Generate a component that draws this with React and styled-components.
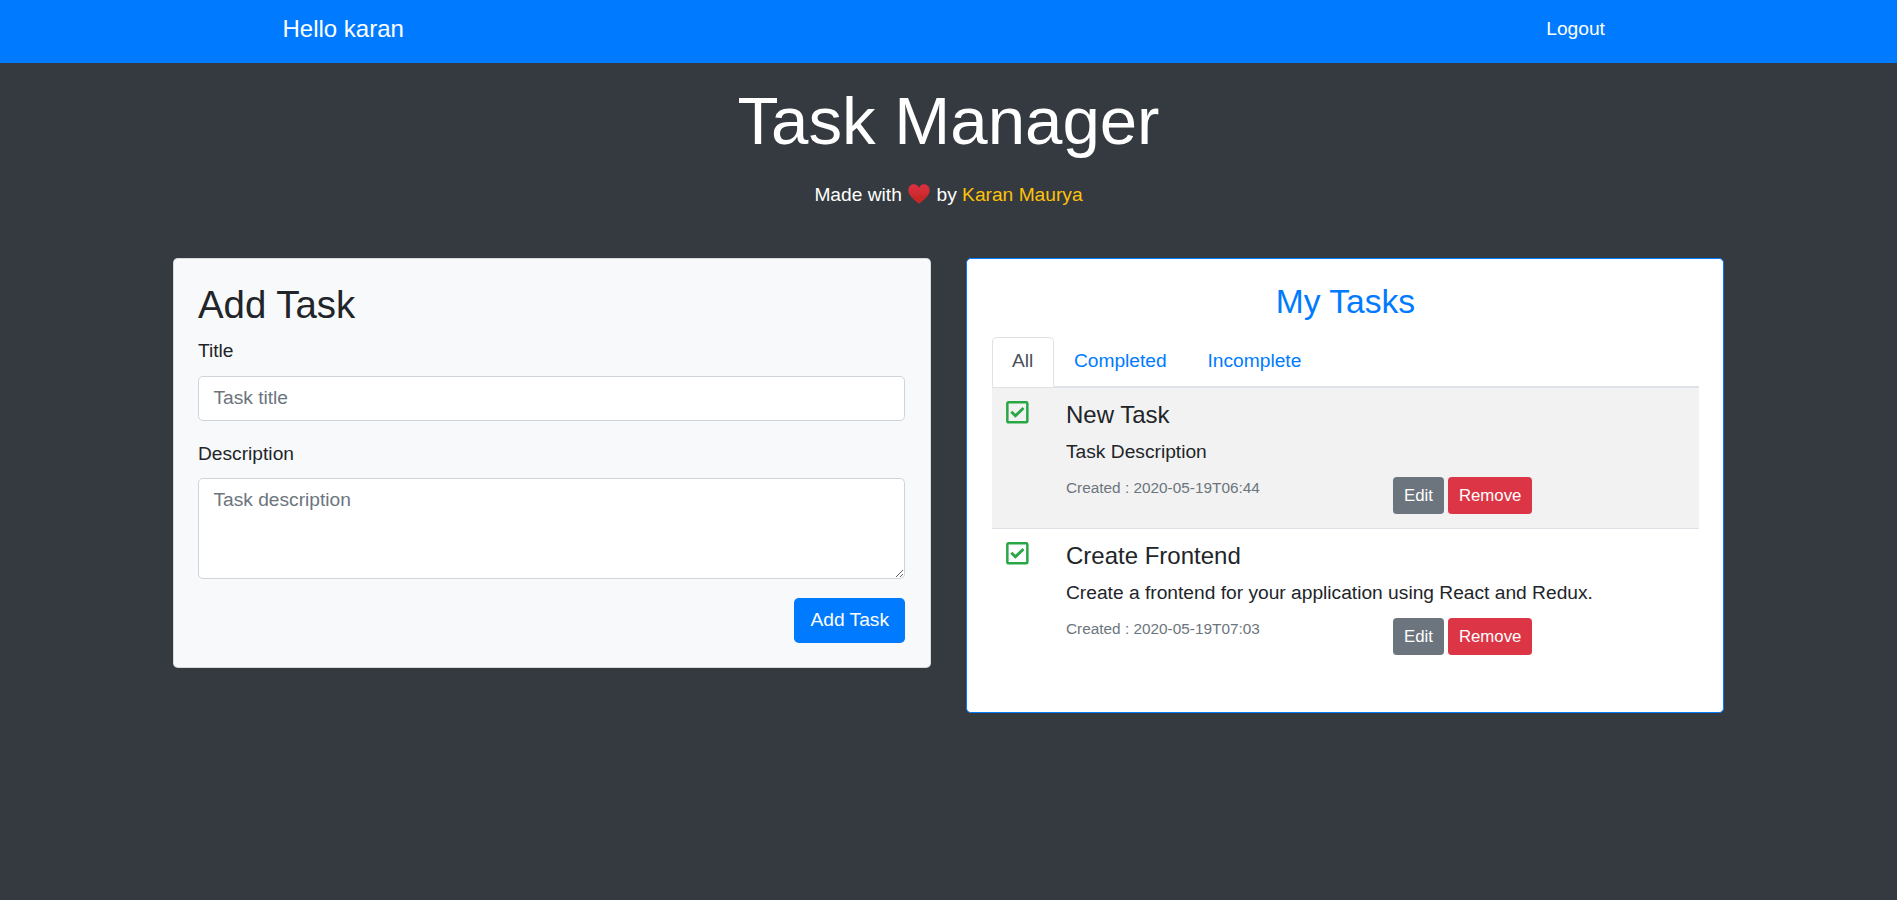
import React from "react";
import styled, { createGlobalStyle, css } from "styled-components";

const GlobalStyle = createGlobalStyle`
  *, *::before, *::after { box-sizing: border-box; }
  html, body { margin: 0; padding: 0; }
  body {
    min-height: 100vh;
    background: #343a40;
    color: #212529;
    font-family: "Liberation Sans", Arial, sans-serif;
    font-size: 19.2px;
    line-height: 29px;
  }
  h1, h2, h3, h4, p { margin: 0; font-weight: 400; }
`;

const Navbar = styled.nav`
  height: 63px;
  background: #007bff;
`;

const NavInner = styled.div`
  display: flex;
  align-items: center;
  justify-content: space-between;
  width: 1368px;
  height: 57px;
  margin: 0 auto;
  padding: 0 27.6px 0 18px;
`;

const Brand = styled.a`
  color: #fff;
  font-size: 24px;
  line-height: 36px;
`;

const NavLink = styled.a`
  color: #fff;
`;

const Hero = styled.header`
  padding-top: 17px;
  color: #fff;
  text-align: center;
`;

const HeroTitle = styled.h1`
  font-size: 67.2px;
  font-weight: 300;
  line-height: 81px;
`;

const Credit = styled.p`
  margin-top: 19px;
`;

const HeartIcon = styled.svg`
  width: 24px;
  height: 20px;
  vertical-align: -3px;
`;

const Author = styled.span`
  color: #ffc107;
`;

const Columns = styled.main`
  display: grid;
  grid-template-columns: 758px 758px;
  gap: 35px;
  align-items: start;
  width: 1551px;
  margin: 49px auto 0;
`;

const Card = styled.section`
  border: 1px solid ${(p) => (p.$primary ? "#007bff" : "rgba(0, 0, 0, 0.125)")};
  border-radius: 4.8px;
  background: ${(p) => (p.$primary ? "#fff" : "#f8f9fa")};
`;

const FormCard = styled(Card)`
  padding: 23px 25px 24px 24px;
`;

const TasksCard = styled(Card)`
  padding: 22px 24px 43px 25px;
`;

const FormTitle = styled.h2`
  font-size: 38.4px;
  line-height: 45px;
`;

const Label = styled.label`
  display: block;
  margin-top: ${(p) => p.$gap}px;
`;

const field = css`
  display: block;
  width: 100%;
  border: 1px solid #ced4da;
  border-radius: 4.8px;
  background: #fff;
  color: #495057;
  font: inherit;
  outline: none;
  &::placeholder { color: #6c757d; opacity: 1; }
`;

const TextInput = styled.input`
  ${field}
  height: 45px;
  margin-top: 11px;
  padding: 6px 14.4px 8px;
`;

const TextArea = styled.textarea`
  ${field}
  height: 101px;
  margin-top: 10px;
  padding: 6px 14.4px;
  resize: vertical;
`;

const FormActions = styled.div`
  display: flex;
  justify-content: flex-end;
  margin-top: 19px;
`;

const buttonColors = {
  primary: "#007bff",
  secondary: "#6c757d",
  danger: "#dc3545",
};

const Button = styled.button`
  height: ${(p) => (p.$small ? 37 : 45)}px;
  padding: ${(p) => (p.$small ? "0 11px 1px" : "0 16px 2px")};
  border: 0;
  border-radius: ${(p) => (p.$small ? 3.84 : 4.8)}px;
  background: ${(p) => buttonColors[p.$variant]};
  color: #fff;
  font-family: inherit;
  font-size: ${(p) => (p.$small ? 16.8 : 19.2)}px;
  line-height: ${(p) => (p.$small ? 25 : 29)}px;
`;

const TasksTitle = styled.h3`
  color: #007bff;
  font-size: 33.6px;
  line-height: 41px;
  text-align: center;
`;

const Tabs = styled.div`
  display: flex;
  height: 50px;
  margin-top: 15px;
  border-bottom: 1px solid #dee2e6;
`;

const Tab = styled.a`
  height: 50px;
  padding: 8px 19.4px 0;
  border: 1px solid transparent;
  border-radius: 4.8px 4.8px 0 0;
  color: #007bff;
  ${(p) =>
    p.$active &&
    css`
      padding: 8px 19.2px 0 19px;
      border-color: #dee2e6 #dee2e6 #fff;
      background: #fff;
      color: #495057;
    `}
`;

const TaskRow = styled.article`
  display: grid;
  grid-template-columns: 74px 1fr;
  height: 141px;
  padding-top: 12px;
  border-top: 1px solid #dee2e6;
  &:nth-child(odd) { background: #f2f2f2; }
`;

const CheckIcon = styled.svg`
  display: block;
  width: 23px;
  height: 23px;
  margin: 1px 0 0 14px;
  fill: none;
  stroke: #28a745;
`;

const TaskName = styled.h4`
  font-size: 24px;
  line-height: 29px;
`;

const TaskText = styled.p`
  margin-top: 8px;
`;

const TaskMeta = styled.div`
  display: grid;
  grid-template-columns: 327px auto;
  justify-content: start;
  margin-top: 11px;
`;

const Created = styled.small`
  color: #6c757d;
  font-size: 15.36px;
  line-height: 21px;
`;

const TaskActions = styled.div`
  display: flex;
  gap: 4px;
`;

const tasks = [
  { name: "New Task", text: "Task Description", created: "2020-05-19T06:44" },
  {
    name: "Create Frontend",
    text: "Create a frontend for your application using React and Redux.",
    created: "2020-05-19T07:03",
  },
];

function Heart() {
  return (
    <HeartIcon viewBox="0 0 24 20" role="img" aria-label="love">
      <defs>
        <linearGradient id="heart" x1="0" y1="0" x2="0" y2="1">
          <stop offset="0" stopColor="#dc3040" />
          <stop offset="0.45" stopColor="#d02c34" />
          <stop offset="0.65" stopColor="#c62828" />
        </linearGradient>
      </defs>
      <path
        fill="url(#heart)"
        d="M12 19.800C9.300 17.400 1.300 12 1.300 6.200C1.300 2.700 3.800 0.300 6.900 0.300C9.300 0.300 11.200 1.700 12 3.900C12.800 1.700 14.700 0.300 17.100 0.300C20.200 0.300 22.700 2.700 22.700 6.200C22.700 12 14.700 17.400 12 19.800Z"
      />
    </HeartIcon>
  );
}

function Task({ name, text, created }) {
  return (
    <TaskRow>
      <CheckIcon viewBox="0 0 23 23">
        <rect x="1.35" y="1.35" width="20" height="20" rx="1.2" strokeWidth="2.5" />
        <path d="M5.300 10.700L9.400 14.800L17.500 7" strokeWidth="2.8" />
      </CheckIcon>
      <div>
        <TaskName>{name}</TaskName>
        <TaskText>{text}</TaskText>
        <TaskMeta>
          <Created>Created : {created}</Created>
          <TaskActions>
            <Button $small $variant="secondary">Edit</Button>
            <Button $small $variant="danger">Remove</Button>
          </TaskActions>
        </TaskMeta>
      </div>
    </TaskRow>
  );
}

export default function App() {
  return (
    <>
      <GlobalStyle />
      <Navbar>
        <NavInner>
          <Brand>Hello karan</Brand>
          <NavLink>Logout</NavLink>
        </NavInner>
      </Navbar>
      <Hero>
        <HeroTitle>Task Manager</HeroTitle>
        <Credit>
          Made with <Heart /> by <Author>Karan Maurya</Author>
        </Credit>
      </Hero>
      <Columns>
        <FormCard>
          <FormTitle>Add Task</FormTitle>
          <Label htmlFor="title" $gap={9}>Title</Label>
          <TextInput id="title" placeholder="Task title" />
          <Label htmlFor="description" $gap={18}>Description</Label>
          <TextArea id="description" placeholder="Task description" />
          <FormActions>
            <Button $variant="primary">Add Task</Button>
          </FormActions>
        </FormCard>
        <TasksCard $primary>
          <TasksTitle>My Tasks</TasksTitle>
          <Tabs>
            <Tab $active>All</Tab>
            <Tab>Completed</Tab>
            <Tab>Incomplete</Tab>
          </Tabs>
          <div>
            {tasks.map((task) => (
              <Task key={task.name} {...task} />
            ))}
          </div>
        </TasksCard>
      </Columns>
    </>
  );
}
